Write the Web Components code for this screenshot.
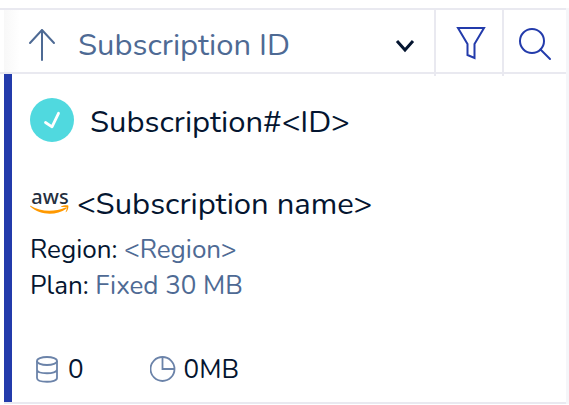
<!DOCTYPE html>
<html lang="en">
<head>
<meta charset="utf-8">
<title>Subscriptions</title>
<style>
:root { --ink:#041530; --muted:#4e6a94; --blue:#233bab; --line:#e9e9f0; }
body { margin:0; background:#fff; color:var(--ink); font-family:Nunito,"Noto Sans","Open Sans",sans-serif; }
</style>
</head>
<body>
<subscription-panel></subscription-panel>
<script>
const define = (name, html, setup) => customElements.define(name, class extends HTMLElement {
  constructor() {
    super();
    this.attachShadow({ mode: "open" }).innerHTML = html;
    if (setup) setup(this);
  }
});

define("sort-bar", `
<style>
:host { display:flex; align-items:stretch; height:62px; border-block:2px solid var(--line); background:linear-gradient(90deg,#fff 4px,#f8f8f8 4px,#fff 20px); padding-left:4px; }
button { all:unset; box-sizing:border-box; display:flex; align-items:center; justify-content:center; cursor:pointer; padding-top:6px; }
button:focus-visible { outline:2px solid var(--blue); }
.sort { width:74px; padding-top:8px; padding-left:2px; }
.pick { flex:1; min-width:0; display:grid; align-items:center; }
.pick > * { grid-area:1/1; }
.pick svg { justify-self:end; margin:10px 17px 0 0; pointer-events:none; }
select { appearance:none; border:0; margin:0; padding:8px 0 0; width:100%; height:100%; background:none; color:var(--muted); font-family:inherit; font-size:31px; }
.tool { width:68px; border-left:2px solid var(--line); padding-left:2px; margin-bottom:-4px; padding-bottom:4px; }
.filter { padding-top:4px; padding-left:4px; }
.search { width:64px; padding-left:0; }
svg { fill:none; display:block; }
</style>
<button class="sort" aria-label="Sort ascending"><svg width="28" height="34" viewBox="0 0 28 34" stroke="#4e6a94" stroke-width="2" stroke-linecap="round" stroke-linejoin="round"><path d="M14 32V2M2 15L14 2l12 13"/></svg></button>
<div class="pick"><select aria-label="Sort by"><option>Subscription ID</option></select>
<svg width="24" height="18" viewBox="0 0 24 18" stroke="#041530" stroke-width="3"><path d="M4 4l8 9 8-9"/></svg></div>
<button class="tool filter" aria-label="Filter"><svg width="30" height="34" viewBox="0 0 30 34" stroke="#233bab" stroke-width="2"><path d="M2 2h26l-9.500 16v14l-7-3V18z"/></svg></button>
<button class="tool search" aria-label="Search"><svg width="34" height="34" viewBox="0 0 34 34" stroke="#233bab" stroke-width="2" stroke-linecap="round"><circle cx="14" cy="14" r="12"/><path d="M22.500 22.500L32 32"/></svg></button>`);

define("status-badge", `
<style>:host { display:block; width:44px; height:44px; flex:none; } svg { display:block; }</style>
<svg width="44" height="44" viewBox="0 0 44 44" role="img" aria-label="Active"><circle cx="22" cy="22" r="22" fill="#50d9df"/><path d="M15.500 24.500l6.500 4.300 6.500-13.500" fill="none" stroke="#fff" stroke-width="2.800" stroke-linecap="round" stroke-linejoin="round"/></svg>`);

define("aws-logo", `
<style>
:host { display:flex; flex-direction:column; align-items:center; width:40px; flex:none; color:#252f3e; font-family:"Noto Sans","Open Sans",sans-serif; font-size:20px; font-weight:500; line-height:16px; padding-bottom:2px; }
svg { display:block; }
</style>
<span>aws</span>
<svg width="40" height="10" viewBox="0 0 40 10" fill="#ff9900"><path d="M0.500 0.800C11 7 24 7.200 35.500 2.500c1-.4 1.700.5.8 1.200C26 10.800 10.500 10.600.3 1.500-.1 1 .1.600.500.800z"/><path d="M31 1.600c2-1.400 6.500-1.600 7.200-1 .6.700-.1 4.900-2 6.500-.4.300-.8.100-.5-.3.500-1 1.500-3.500 1-4.200-.6-.8-3.600-.5-5.100-.5-.6 0-.8-.3-.6-.5z"/></svg>`);

define("detail-row", `
<style>:host { display:block; font-size:26px; line-height:36px; } ::slotted(*) { color:var(--muted); }</style>
<span></span> <slot></slot>`, el => el.shadowRoot.querySelector("span").textContent = el.getAttribute("label") + ":");

define("usage-stat", `
<style>:host { display:flex; align-items:center; gap:8px; font-size:26px; line-height:36px; }</style>
<slot name="icon"></slot><slot></slot>`);

define("subscription-card", `
<style>
:host { display:block; margin-left:4px; border-left:8px solid var(--blue); padding:24px 18px 14px; }
h2, h3 { margin:0; font-size:31px; font-weight:400; line-height:44px; padding-top:2px; white-space:nowrap; }
header, .name, footer { display:flex; align-items:center; }
header { gap:16px; align-items:flex-start; }
.name { gap:7px; margin:36px 0 6px; }
footer { gap:66px; margin-top:48px; padding-left:4px; }
svg { display:block; fill:none; stroke:#6b83a9; stroke-width:1.800; }
</style>
<header><status-badge></status-badge><h2>Subscription#&lt;ID&gt;</h2></header>
<div class="name"><aws-logo></aws-logo><h3>&lt;Subscription name&gt;</h3></div>
<detail-row label="Region"><span>&lt;Region&gt;</span></detail-row>
<detail-row label="Plan"><span>Fixed 30 MB</span></detail-row>
<footer>
<usage-stat><svg slot="icon" width="26" height="28" viewBox="0 0 26 28"><ellipse cx="13" cy="5" rx="10" ry="4"/><path d="M3 5v17c0 5 20 5 20 0V5M3 13.500c0 5 20 5 20 0"/></svg>0</usage-stat>
<usage-stat><svg slot="icon" width="26" height="28" viewBox="0 0 26 28"><circle cx="12.500" cy="13" r="12"/><path d="M12.500 1v12h12"/></svg>0MB</usage-stat>
</footer>`);

define("subscription-panel", `
<style>
:host { display:grid; grid-template-columns:minmax(0,1fr) 3px; padding-top:8px; }
.rail { background:#f5f6f9; }
.end { height:2px; margin-left:4px; background:var(--line); }
</style>
<main><sort-bar></sort-bar><subscription-card></subscription-card><div class="end"></div></main><div class="rail"></div>`);
</script>
</body>
</html>
